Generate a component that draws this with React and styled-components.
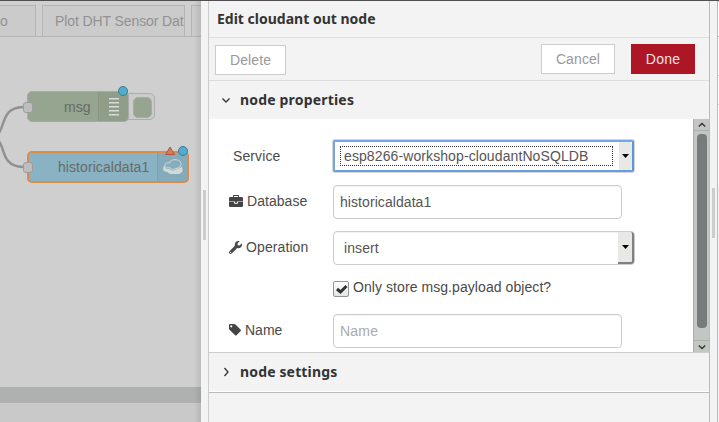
import React from "react";
import styled, { createGlobalStyle } from "styled-components";
import { FaWrench } from "react-icons/fa";

const Global = createGlobalStyle`
  * { box-sizing: border-box; }
  body { margin: 0; background: #f3f3f3; overflow: hidden; }
  button, input { font: inherit; }
`;

const Page = styled.div`
  width: 719px;
  height: 422px;
  display: flex;
  overflow: hidden;
  border-top: 1px solid #504e50;
  background: #f3f3f3;
  color: #4a4a4a;
  font: 14px/20px "Liberation Sans", Arial, sans-serif;
`;

const Text = styled.span`
  display: inline-block;
  white-space: nowrap;
  letter-spacing: ${(p) => p.$ls || 0}px;
`;

/* Workspace */
const Workspace = styled.section`
  width: 201px;
  flex: none;
  display: flex;
  flex-direction: column;
  overflow: hidden;
  background: #cfcfcf;
  position: relative;
  &::after {
    content: "";
    position: absolute;
    inset: 0 0 0 auto;
    width: 7px;
    background: linear-gradient(90deg, transparent, rgba(0, 0, 0, 0.09));
  }
`;
const Tabs = styled.div`
  height: 36px;
  flex: none;
  padding-top: 4px;
  display: flex;
  gap: 6px;
  border-bottom: 1px solid #b4b4b4;
`;
const Tab = styled.div`
  width: ${(p) => p.$w}px;
  flex: none;
  border: 1px solid #b4b4b4;
  border-bottom: 0;
  padding: 5px 0 0 ${(p) => p.$pad}px;
  overflow: hidden;
  color: #919191;
  background: #cbcbcb;
  margin-left: ${(p) => p.$shift || 0}px;
`;
const Canvas = styled.div`
  position: relative;
  flex: 1;
`;
const Wires = styled.svg`
  position: absolute;
  left: 0;
  top: 0;
`;
const FlowNode = styled.div`
  position: absolute;
  left: 27px;
  top: ${(p) => p.$top}px;
  width: ${(p) => p.$w}px;
  height: ${(p) => p.$h}px;
  display: flex;
  align-items: center;
  justify-content: space-between;
  padding-left: ${(p) => p.$pad}px;
  border: ${(p) => (p.$selected ? "2px solid #d88c4d" : "1px solid #a8aaa7")};
  border-radius: 5px;
  background: ${(p) => p.$bg};
  color: #686a69;
`;
const NodeIcon = styled.div`
  width: 30px;
  height: 100%;
  display: flex;
  align-items: center;
  justify-content: center;
  background: rgba(0, 0, 0, 0.04);
  border-left: 1px solid rgba(0, 0, 0, 0.05);
`;
const Port = styled.i`
  position: absolute;
  left: 22.5px;
  top: ${(p) => p.$top}px;
  width: 10px;
  height: 11px;
  border: 1px solid #9d9d9d;
  border-radius: 3px;
  background: #bebebe;
`;
const DebugButton = styled.div`
  position: absolute;
  left: 124px;
  top: 56px;
  width: 31px;
  height: 27px;
  padding: 4px 4px 4px 8px;
  border: 1px solid #adadad;
  border-radius: 5px;
  background: #cbcbcb;
  &::after {
    content: "";
    display: block;
    width: 17px;
    height: 19px;
    margin-top: -1px;
    border: 1px solid #a9aba8;
    border-radius: 5px;
    background: #95a58f;
  }
`;
const Band = styled.div`
  height: 16px;
  flex: none;
  background: #afb1b0;
`;
const Footer = styled.div`
  height: 19px;
  flex: none;
  background: #c9c9c9;
`;

/* Splitters */
const Splitter = styled.div`
  width: ${(p) => p.$w}px;
  flex: none;
  padding-left: ${(p) => p.$pad}px;
  padding-top: ${(p) => p.$top}px;
  background: #f3f3f3;
  border-right: 1px solid ${(p) => p.$line};
  &::before {
    content: "";
    display: block;
    width: 3px;
    height: 50px;
    background: #ccc;
  }
`;
const SideEdge = styled.div`
  width: 1px;
  height: 183px;
  background: linear-gradient(#bbb 0 1px, #fff 1px 35px, #bbb 35px 36px, #fff 36px 74px, #ccc 74px 75px, #fff 75px 103px, #ccc 103px 104px, #fff 104px);
`;

/* Edit tray */
const Tray = styled.section`
  width: 501px;
  flex: none;
  display: flex;
  flex-direction: column;
  border-right: 1px solid #bbb;
`;
const Title = styled.h1`
  margin: 0;
  height: 37px;
  flex: none;
  padding: 8px 0 0 8px;
  border-bottom: 1px solid #ddd;
  font: bold 14px/20px "Noto Sans", sans-serif;
  color: #333;
`;
const Toolbar = styled.div`
  height: 43px;
  flex: none;
  display: flex;
  align-items: flex-start;
  gap: 16px;
  padding: 6px 14px 0 6px;
  border-bottom: 1px solid #ddd;
`;
const Button = styled.button`
  width: ${(p) => p.$w}px;
  height: 30px;
  padding: 0;
  border: 1px solid ${(p) => (p.$primary ? "#ad1625" : "#ccc")};
  background: ${(p) => (p.$primary ? "#ad1625" : "#fff")};
  color: ${(p) => (p.$primary ? "#f3e4e5" : "#999")};
  ${(p) => p.$left && "margin: 1px auto 0 0;"}
`;
const SectionHead = styled.div`
  height: ${(p) => p.$h}px;
  flex: none;
  display: flex;
  align-items: center;
  gap: 9px;
  padding-left: 12px;
  font: bold 14px/20px "Noto Sans", sans-serif;
  color: #333;
  ${(p) => p.$closed && "padding-bottom: 2px; border-top: 1px solid #ccc; border-bottom: 1px solid #bbb; box-shadow: inset 0 -1px #fff;"}
`;
const Body = styled.div`
  height: 233px;
  flex: none;
  display: flex;
  overflow: hidden;
  background: #fff;
`;
const Form = styled.form`
  flex: 1;
  padding: 20px 0 0 20px;
`;
const Row = styled.div`
  height: ${(p) => p.$h}px;
  display: flex;
`;
const Label = styled.label`
  width: 104px;
  flex: none;
  display: flex;
  align-items: center;
  height: 34px;
  padding-bottom: ${(p) => (p.$pad ? 0 : 2)}px;
  gap: ${(p) => p.$gap || 0}px;
  padding-left: ${(p) => p.$pad || 0}px;
  color: #4a4a4a;
`;
const Field = styled.div`
  width: ${(p) => (p.$select ? 302 : 289)}px;
  height: 34px;
  display: flex;
  align-items: center;
  padding-left: ${(p) => (p.$select ? 10 : 6)}px;
  border: 1px solid #ccc;
  border-radius: 4px;
  color: ${(p) => (p.$muted ? "#aaa" : "#555")};
  box-shadow: inset 0 1px 1px rgba(0, 0, 0, 0.05);
`;
const FocusField = styled(Field)`
  height: 32px;
  margin-top: 1px;
  padding-left: 5px;
  border: 2px solid #75a7e8;
  border-bottom-color: #689ddf;
  border-right-color: #5e94d8;
  border-radius: 2px;
  box-shadow: 0 0 0 1px #d5d5d5;
  width: 301px;
`;
const FocusText = styled.span`
  width: 273px;
  height: 20px;
  padding-left: 3px;
  line-height: 19px;
  border: 1px dotted #333;
`;
const Arrow = styled.span`
  margin-left: auto;
  width: ${(p) => (p.$focus ? 13 : 16)}px;
  height: 100%;
  display: flex;
  align-items: center;
  justify-content: center;
  background: #e8e8e6;
  border-right: ${(p) => (p.$focus ? 0 : 2)}px solid #808080;
  border-bottom: ${(p) => (p.$focus ? 0 : 2)}px solid #808080;
  border-radius: 0 3px 3px 0;
`;
const Check = styled.span`
  width: 16px;
  height: 16px;
  margin: 4px 4px 0 104px;
  border: 1px solid #939390;
  border-radius: 2px;
  background: linear-gradient(#fff, #e5e5e2);
  display: flex;
`;
const Scrollbar = styled.div`
  width: 16px;
  display: flex;
  flex-direction: column;
  align-items: center;
  background: #c4c6c4;
  border-left: 1px solid #aaaeab;
`;
const ScrollEnd = styled.div`
  width: 100%;
  height: 12px;
  display: flex;
  align-items: center;
  justify-content: center;
  border: 0 solid #adb1ad;
  border-width: ${(p) => (p.$down ? "1px 0 0" : "0 0 1px")};
`;
const Thumb = styled.div`
  width: 10px;
  height: 194px;
  margin: 3px 0 12px;
  border-radius: 4px;
  background: #777b7b;
`;

const Chevron = ({ d, size = 10, w = 1.3 }) => (
  <svg width={size} height={size} viewBox="0 0 10 10" fill="none" stroke="#333" strokeWidth={w}>
    <path d={d} />
  </svg>
);
const Caret = () => (
  <svg width="7" height="4" viewBox="0 0 7 4"><path d="M0 0h7L3.5 4z" fill="#000" /></svg>
);
const Briefcase = () => (
  <svg width="14" height="12" viewBox="0 0 14 12" fill="#444">
    <path d="M4 2V.8Q4 0 4.8 0h4.4Q10 0 10 .8V2h2.8Q14 2 14 3.2V6.500H0V3.2Q0 2 1.2 2zM5 1v1h4V1zM0 7h5v1q0 .7.7.7h2.6Q9 8.700 9 8V7h5v3.800Q14 12 12.800 12H1.200Q0 12 0 10.800zM6 6.500h2V7.800H6z" fillRule="evenodd" />
  </svg>
);
const Tag = () => (
  <svg width="12" height="12" viewBox="0 0 12 12" fill="#444">
    <path d="M0 1q0-1 1-1h4q1 0 1.700.7l5 5q.6.6 0 1.300l-4.200 4.200q-.7.700-1.300 0L.7 5.900Q0 5.200 0 4.500zM2.200 1.200a1.100 1.100 0 1 0 .1 0z" fillRule="evenodd" />
  </svg>
);

export default function App() {
  return (
    <>
      <Global />
      <Page>
        <Workspace>
          <Tabs>
            <Tab $w={37} $pad={0} $shift={-1}>o</Tab>
            <Tab $w={143} $pad={12}><Text $ls={-0.1}>Plot DHT Sensor Dat</Text></Tab>
            <Tab $w={20} $pad={0} />
          </Tabs>
          <Canvas>
            <Wires width="40" height="200" fill="none" stroke="#919191" strokeWidth="2.5">
              <path d="M-2 97C6 88 1 71 23 70M-2 103C6 112 1 129 23 130" />
            </Wires>
            <DebugButton />
            <FlowNode $top={54} $w={102} $h={31} $pad={36} $bg="#95a58f">
              <Text>msg</Text>
              <NodeIcon>
                <svg width="10" height="18" fill="#d9dcd8">
                  {[0, 4, 8, 12, 16].map((y) => <rect key={y} y={y} width="10" height="1.5" />)}
                </svg>
              </NodeIcon>
            </FlowNode>
            <FlowNode $top={114} $w={162} $h={32} $pad={29} $bg="#89b2c2" $selected>
              <Text $ls={0.07}>historicaldata1</Text>
              <NodeIcon>
                <svg width="20" height="16" viewBox="0 0 20 16">
                  <path d="M1.500 6.500C-.8 8.500-.3 13 3.500 12.800c1.500 0 1.500 2.200 5 2.200h7c4.500-.5 5-5 3-7.500-1.500 2.500-4 2-5.500 3-2.500 2-5 1-6-.5-3 .5-5-.5-5.500-3.500z" fill="#d3d8d9" />
                  <path d="M2 6.500C1.500 4.300 4 3.500 6.500 4 7 1.500 9.500.700 12 .7c4 0 6.500 2 6 4.800 0 2.500-2 3.500-5 4-2 1.300-4.500 1-6-.7C4.500 9.200 2 8.500 2 6.500z" fill="#87aebd" stroke="#d3d8d9" />
                </svg>
              </NodeIcon>
            </FlowNode>
            <Port $top={65} />
            <Port $top={125} />
            <Wires width="200" height="160" strokeWidth="1">
              <circle cx="123" cy="54" r="4.500" fill="#4daed0" stroke="#43798f" />
              <circle cx="183" cy="114" r="4.500" fill="#4daed0" stroke="#43798f" />
              <path d="M170 110l4.500 7.500h-9z" fill="#d08050" stroke="#b45449" strokeLinejoin="round" />
            </Wires>
          </Canvas>
          <Band />
          <Footer />
        </Workspace>
        <Splitter $w={8} $pad={2} $top={189} $line="#ccc" />
        <Tray>
          <Title><Text>Edit cloudant out node</Text></Title>
          <Toolbar>
            <Button $w={71} $left><Text $ls={0.1}>Delete</Text></Button>
            <Button $w={74}><Text $ls={0.1}>Cancel</Text></Button>
            <Button $w={64} $primary><Text $ls={0.2}>Done</Text></Button>
          </Toolbar>
          <SectionHead $h={38}>
            <Chevron d="M1.500 3.500L5 7l3.500-3.500" />
            <Text $ls={0.18}>node properties</Text>
          </SectionHead>
          <Body>
            <Form>
              <Row $h={46}>
                <Label $pad={4}><Text $ls={0.1}>Service</Text></Label>
                <FocusField>
                  <FocusText><Text $ls={0.1}>esp8266-workshop-cloudantNoSQLDB</Text></FocusText>
                  <Arrow $focus><Caret /></Arrow>
                </FocusField>
              </Row>
              <Row $h={46}>
                <Label $gap={4}><Briefcase /><Text $ls={0.05}>Database</Text></Label>
                <Field><Text $ls={0.07}>historicaldata1</Text></Field>
              </Row>
              <Row $h={46}>
                <Label $gap={4}><FaWrench size={13} /><Text $ls={0.1}>Operation</Text></Label>
                <Field $select><Text $ls={0.1}>insert</Text><Arrow><Caret /></Arrow></Field>
              </Row>
              <Row $h={37}>
                <Check>
                  <svg width="14" height="14" fill="none" stroke="#2e3436" strokeWidth="3"><path d="M3 7l3.500 3L12.500 4" /></svg>
                </Check>
                <Text $ls={0.07}>Only store msg.payload object?</Text>
              </Row>
              <Row $h={34}>
                <Label $gap={4}><Tag /><Text>Name</Text></Label>
                <Field $muted><Text $ls={0.2}>Name</Text></Field>
              </Row>
            </Form>
            <Scrollbar>
              <ScrollEnd><Chevron size={8} w={1.7} d="M1 7l4-4 4 4" /></ScrollEnd>
              <Thumb />
              <ScrollEnd $down><Chevron size={8} w={1.7} d="M1 3l4 4 4-4" /></ScrollEnd>
            </Scrollbar>
          </Body>
          <SectionHead $h={41} $closed>
            <Chevron d="M3.500 1l3.500 4-3.500 4" />
            <Text $ls={0.15}>node settings</Text>
          </SectionHead>
        </Tray>
        <Splitter $w={8} $pad={2} $top={187} $line="#bbb" />
        <SideEdge />
      </Page>
    </>
  );
}
